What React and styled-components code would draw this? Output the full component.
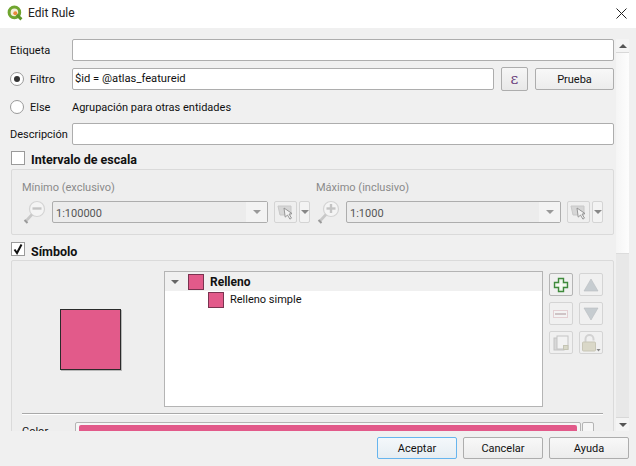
import React from 'react'
import styled, { createGlobalStyle } from 'styled-components'

const Global = createGlobalStyle`
  html, body { margin: 0; padding: 0; background: #f0f0f0; }
  * { box-sizing: border-box; }
  body { font-family: Roboto, "Open Sans", sans-serif; font-size: 11px; color: #111; }
`

const Window = styled.div`
  width: 636px;
  height: 466px;
  display: flex;
  flex-direction: column;
  overflow: hidden;
  background: #f0f0f0;
`

const TitleBar = styled.div`
  height: 28px;
  flex: none;
  background: #fff;
  display: flex;
  align-items: center;
  padding: 0 9px 2px 7px;
  gap: 5px;
  font-size: 12px;
  color: #222;
`

const TitleText = styled.span`
  flex: 1;
`

const ScrollRow = styled.div`
  height: 403px;
  flex: none;
  display: flex;
  padding-right: 7px;
`

const Content = styled.div`
  width: 616px;
  height: 403px;
  overflow: hidden;
  padding: 11px 2px 0 0;
`

const Scrollbar = styled.div`
  width: 13px;
  margin-top: 11px;
  display: flex;
  flex-direction: column;
  background: #fafafa;
`

const ScrollButton = styled.div`
  height: 14px;
  flex: none;
  display: flex;
  align-items: center;
  justify-content: center;
  background: #f4f4f4;
  border-top: ${p => (p.$down ? '1px solid #d8d8d8' : 'none')};
  border-bottom: ${p => (p.$down ? 'none' : '1px solid #d8d8d8')};
`

const ScrollTrack = styled.div`
  flex: 1;
  background: linear-gradient(90deg, #f5f5f5, #fdfdfd);
`

const ScrollThumb = styled.div`
  height: 164px;
  flex: none;
  background: #e8e8e8;
  border-top: 1px solid #dcdcdc;
`

const Arrow = styled.span`
  width: 0;
  height: 0;
  border-left: 4px solid transparent;
  border-right: 4px solid transparent;
  ${p => (p.$up
    ? `border-bottom: 4px solid ${p.$color || '#555'};`
    : `border-top: 4px solid ${p.$color || '#555'};`)}
`

const Form = styled.div`
  display: flex;
  flex-direction: column;
  gap: 7px;
  padding-left: 10px;
`

const Row = styled.div`
  height: ${p => p.$h || 22}px;
  display: flex;
  align-items: center;
`

const Label = styled.label`
  width: 62px;
  flex: none;
`

const RadioLabel = styled.label`
  width: 62px;
  flex: none;
  display: flex;
  align-items: center;
  gap: 6px;
`

const Radio = styled.span`
  width: 14px;
  height: 14px;
  flex: none;
  border-radius: 50%;
  border: 1px solid #9a9a9a;
  background: #fff;
  display: flex;
  align-items: center;
  justify-content: center;
  &::after {
    content: '';
    display: ${p => (p.$on ? 'block' : 'none')};
    width: 6px;
    height: 6px;
    border-radius: 50%;
    background: #333;
  }
`

const Note = styled.span`
  padding-top: 2px;
`

const Input = styled.div`
  height: 22px;
  flex: 1;
  min-width: 0;
  background: #fff;
  border: 1px solid #adadad;
  border-radius: 2px;
  padding: 0 2px;
  line-height: 20px;
  font-size: 11.2px;
`

const ExprButton = styled.div`
  width: 27px;
  height: 24px;
  flex: none;
  margin: 0 7px;
  border: 1px solid #adadad;
  border-radius: 2px;
  background: linear-gradient(#f6f6f6, #e8e8e8);
  display: flex;
  align-items: center;
  justify-content: center;
  color: #6a3d7c;
  font-family: "DejaVu Serif", serif;
  font-size: 15px;
`

const Button = styled.div`
  width: ${p => p.$w || 80}px;
  height: 22px;
  flex: none;
  border: 1px solid ${p => (p.$primary ? '#67b5ee' : '#adadad')};
  border-radius: 2px;
  background: ${p => (p.$primary
    ? 'linear-gradient(#f4f8fb, #e6edf2)'
    : 'linear-gradient(#f8f8f8, #ececec)')};
  display: flex;
  align-items: center;
  justify-content: center;
  color: #111;
`

const GroupHeader = styled.div`
  height: 14px;
  margin: ${p => p.$mt}px 0 4px 11px;
  display: flex;
  align-items: center;
  gap: 6px;
  font-weight: 700;
  font-size: 12.5px;
  color: #111;
`

const HeaderText = styled.span`
  line-height: 16px;
  padding-top: ${p => p.$pt}px;
`

const Check = styled.span`
  width: 14px;
  height: 14px;
  flex: none;
  background: #fff;
  border: 1px solid #9a9a9a;
  display: flex;
  align-items: center;
  justify-content: center;
`

const ScaleBox = styled.div`
  margin-left: 11px;
  height: 66px;
  border: 1px solid #dadada;
  border-radius: 2px;
  background: #eeeeee;
  padding: 10px 10px 0 10px;
  display: flex;
`

const ScaleCol = styled.div`
  width: ${p => p.$w}px;
  flex: none;
  display: flex;
  flex-direction: column;
  gap: 5px;
`

const DisabledLabel = styled.div`
  color: #8a8a8a;
  height: 16px;
  line-height: 16px;
`

const ScaleRow = styled.div`
  display: flex;
  align-items: center;
  height: 22px;
`

const Combo = styled.div`
  width: ${p => p.$w}px;
  height: 22px;
  flex: none;
  margin-left: 6px;
  border: 1px solid #adadad;
  border-radius: 2px;
  background: #ececec;
  color: #555;
  display: flex;
  align-items: center;
  justify-content: space-between;
  padding-left: 3px;
`

const ComboText = styled.span`
  padding-top: 2px;
`

const ComboDrop = styled.span`
  width: 21px;
  height: 20px;
  background: #f3f3f3;
  display: flex;
  align-items: center;
  justify-content: center;
`

const ToolButton = styled.span`
  width: 23px;
  height: 22px;
  flex: none;
  margin-left: 6px;
  border: 1px solid #d4d4d4;
  border-radius: 2px;
  background: #efefef;
  display: flex;
  align-items: center;
  justify-content: center;
`

const ToolDrop = styled.span`
  width: 11px;
  height: 22px;
  flex: none;
  margin-left: 2px;
  border: 1px solid #d4d4d4;
  border-radius: 2px;
  background: #f3f3f3;
  display: flex;
  align-items: center;
  justify-content: center;
`

const SymbolBox = styled.div`
  margin-left: 11px;
  height: 200px;
  border: 1px solid #dadada;
  border-radius: 2px;
  background: #eeeeee;
  padding: 10px 10px 0 10px;
`

const SymbolTop = styled.div`
  display: flex;
  height: 136px;
`

const PreviewArea = styled.div`
  width: 142px;
  flex: none;
  padding: 38px 0 0 38px;
`

const Preview = styled.div`
  width: 61px;
  height: 61px;
  background: #e25a8a;
  border: 1px solid #2b2b2b;
  box-shadow: 1px 1px 0 #b8b8b8;
`

const Tree = styled.div`
  width: 379px;
  height: 136px;
  flex: none;
  background: #fff;
  border: 1px solid #b4b4b4;
`

const TreeRow = styled.div`
  height: ${p => p.$h}px;
  display: flex;
  align-items: center;
  padding-left: ${p => p.$indent}px;
  gap: 6px;
  background: ${p => (p.$head ? '#f0f0f0' : '#fff')};
  font-weight: ${p => (p.$head ? 700 : 400)};
  font-size: ${p => (p.$head ? 12 : 11)}px;
`

const Swatch = styled.span`
  width: 16px;
  height: 16px;
  flex: none;
  background: #e25a8a;
  border: 1px solid #7a3350;
`

const TreeArrow = styled.span`
  margin-right: 3px;
  display: flex;
`

const SideButtons = styled.div`
  margin: 2px 0 0 6px;
  display: grid;
  grid-template-columns: 24px 24px;
  grid-auto-rows: 23px;
  gap: 6px;
`

const SideButton = styled.div`
  border: 1px solid ${p => (p.$on ? '#b5b5b5' : '#d4d4d4')};
  border-radius: 2px;
  background: #f0f0f0;
  display: flex;
  align-items: center;
  justify-content: center;
`

const Separator = styled.div`
  height: 1px;
  margin-top: 6px;
  background: #a9a9a9;
  box-shadow: 0 1px 0 #fff;
`

const ColorRow = styled.div`
  display: flex;
  align-items: flex-start;
  margin-top: 8px;
`

const ColorLabel = styled.span`
  width: 53px;
  flex: none;
  line-height: 16px;
  padding-top: 2px;
`

const ColorButton = styled.div`
  width: 506px;
  height: 22px;
  flex: none;
  background: #f6f6f6;
  border: 1px solid #b4b4b4;
  border-radius: 2px;
  padding: 2px 3px;
`

const ColorFill = styled.div`
  height: 100%;
  background: #e25a8a;
  border-radius: 2px;
`

const ColorDrop = styled.div`
  width: 12px;
  height: 22px;
  margin-left: 1px;
  flex: none;
  background: #f6f6f6;
  border: 1px solid #b4b4b4;
  border-radius: 2px;
`

const Footer = styled.div`
  flex: 1;
  display: flex;
  justify-content: flex-end;
  align-items: flex-start;
  gap: 6px;
  padding: 6px 7px 0 0;
`

const QgisLogo = () => (
  <svg width="16" height="16" viewBox="0 0 16 16">
    <circle cx="7.4" cy="7.4" r="5.3" fill="#f3efd8" stroke="#6fa52f" strokeWidth="3" />
    <path d="M9.8 9.8 L14.4 14.4" stroke="#5d9427" strokeWidth="3" />
    <circle cx="8.3" cy="8.3" r="2" fill="#e98a3a" />
  </svg>
)

const CloseIcon = () => (
  <svg width="11" height="11" viewBox="0 0 11 11">
    <path d="M.5.5l10 10M10.5.5l-10 10" stroke="#222" strokeWidth="1" fill="none" />
  </svg>
)

const CheckMark = () => (
  <svg width="12" height="12" viewBox="0 0 12 12">
    <path d="M2.5 6.5 L5 10 L9.5 1.5" stroke="#111" strokeWidth="2" fill="none" />
  </svg>
)

const ZoomIcon = ({ plus }) => (
  <svg width="24" height="26" viewBox="0 0 24 26" style={{ flex: 'none' }}>
    <circle cx="15" cy="10" r="7.5" fill="#f4f4f4" stroke="#d4d4d4" strokeWidth="1.2" />
    <path d="M10 15.5 L4 22" stroke="#c8c8c8" strokeWidth="2.6" />
    <path d="M2.5 21 l3 3" stroke="#9a9a9a" strokeWidth="2" />
    <path d="M10.5 9.5h9" stroke="#c4c4c4" strokeWidth="2.4" />
    {plus && <path d="M15 5v9" stroke="#c4c4c4" strokeWidth="2.4" />}
  </svg>
)

const CanvasIcon = () => (
  <svg width="18" height="15" viewBox="0 0 18 15">
    <path d="M1 1h13v9H3z" fill="#d6d6d6" stroke="#c8c8c8" />
    <path d="M7 3l8 5.5-3 .6 2.5 4-1.6 1-2.4-4-2.3 2z" fill="#f2f2f2" stroke="#8f8f8f" strokeWidth=".9" />
  </svg>
)

const PlusIcon = () => (
  <svg width="16" height="16" viewBox="0 0 16 16">
    <path d="M5.5 1.5h5v4h4v5h-4v4h-5v-4h-4v-5h4z" fill="#eaf3e6" stroke="#3f8a3c" strokeWidth="1.4" />
    <path d="M8 3.5v9M3.5 8h9" stroke="#fff" strokeWidth="1" />
  </svg>
)

const MinusIcon = () => (
  <svg width="16" height="10" viewBox="0 0 16 10">
    <rect x=".5" y="1.5" width="14" height="7" fill="#f3f3f3" stroke="#e3cfd2" />
    <rect x="2" y="4" width="11" height="2" fill="#cfc4c6" />
  </svg>
)

const TriIcon = ({ down }) => (
  <svg width="16" height="14" viewBox="0 0 16 14">
    <path d={down ? 'M1 1h14L8 13z' : 'M1 13h14L8 1z'} fill="#c6ccd0" stroke="#b8bcc0" strokeWidth=".6" />
  </svg>
)

const CopyIcon = () => (
  <svg width="16" height="16" viewBox="0 0 16 16">
    <rect x="1" y="3" width="10" height="12" fill="#d8d8d8" stroke="#c4c4c4" />
    <rect x="4" y="1" width="11" height="13" fill="#f2f2f2" stroke="#c4c4c4" />
    <rect x="10.5" y="10.5" width="4.5" height="4" fill="#d8d8c8" stroke="#c4c4b4" />
  </svg>
)

const LockIcon = () => (
  <svg width="20" height="18" viewBox="0 0 20 18">
    <path d="M4.5 8V5a4 4 0 0 1 8 0v1.5" fill="none" stroke="#d2d2d2" strokeWidth="2" />
    <rect x="1.5" y="8" width="13" height="9" rx="1" fill="#dad8c8" stroke="#c8c6b6" />
    <path d="M15.5 15h4l-2 2.5z" fill="#888" />
  </svg>
)

export default function App() {
  return (
    <Window>
      <Global />
      <TitleBar>
        <QgisLogo />
        <TitleText>Edit Rule</TitleText>
        <CloseIcon />
      </TitleBar>

      <ScrollRow>
        <Content>
          <Form>
            <Row>
              <Label>Etiqueta</Label>
              <Input />
            </Row>
            <Row>
              <RadioLabel><Radio $on />Filtro</RadioLabel>
              <Input>$id = @atlas_featureid</Input>
              <ExprButton>ε</ExprButton>
              <Button $w={79}>Prueba</Button>
            </Row>
            <Row $h={19}>
              <RadioLabel><Radio /><Note>Else</Note></RadioLabel>
              <Note>Agrupación para otras entidades</Note>
            </Row>
            <Row>
              <Label>Descripción</Label>
              <Input />
            </Row>
          </Form>

          <GroupHeader $mt={6}>
            <Check />
            <HeaderText $pt={3}>Intervalo de escala</HeaderText>
          </GroupHeader>
          <ScaleBox>
            <ScaleCol $w={294}>
              <DisabledLabel>Mínimo (exclusivo)</DisabledLabel>
              <ScaleRow>
                <ZoomIcon />
                <Combo $w={216}><ComboText>1:100000</ComboText><ComboDrop><Arrow $color="#999" /></ComboDrop></Combo>
                <ToolButton><CanvasIcon /></ToolButton>
                <ToolDrop><Arrow $color="#888" /></ToolDrop>
              </ScaleRow>
            </ScaleCol>
            <ScaleCol $w={290}>
              <DisabledLabel>Máximo (inclusivo)</DisabledLabel>
              <ScaleRow>
                <ZoomIcon plus />
                <Combo $w={215}><ComboText>1:1000</ComboText><ComboDrop><Arrow $color="#999" /></ComboDrop></Combo>
                <ToolButton><CanvasIcon /></ToolButton>
                <ToolDrop><Arrow $color="#888" /></ToolDrop>
              </ScaleRow>
            </ScaleCol>
          </ScaleBox>

          <GroupHeader $mt={7}>
            <Check><CheckMark /></Check>
            <HeaderText $pt={5}>Símbolo</HeaderText>
          </GroupHeader>
          <SymbolBox>
            <SymbolTop>
              <PreviewArea><Preview /></PreviewArea>
              <Tree>
                <TreeRow $head $h={19} $indent={6}>
                  <TreeArrow><Arrow $color="#666" /></TreeArrow>
                  <Swatch />
                  Relleno
                </TreeRow>
                <TreeRow $h={17} $indent={43}>
                  <Swatch />
                  Relleno simple
                </TreeRow>
              </Tree>
              <SideButtons>
                <SideButton $on><PlusIcon /></SideButton>
                <SideButton><TriIcon /></SideButton>
                <SideButton><MinusIcon /></SideButton>
                <SideButton><TriIcon down /></SideButton>
                <SideButton><CopyIcon /></SideButton>
                <SideButton><LockIcon /></SideButton>
              </SideButtons>
            </SymbolTop>
            <Separator />
            <ColorRow>
              <ColorLabel>Color</ColorLabel>
              <ColorButton><ColorFill /></ColorButton>
              <ColorDrop />
            </ColorRow>
          </SymbolBox>
        </Content>
        <Scrollbar>
          <ScrollButton><Arrow $up /></ScrollButton>
          <ScrollTrack />
          <ScrollThumb />
          <ScrollButton $down><Arrow /></ScrollButton>
        </Scrollbar>
      </ScrollRow>

      <Footer>
        <Button $primary>Aceptar</Button>
        <Button>Cancelar</Button>
        <Button>Ayuda</Button>
      </Footer>
    </Window>
  )
}
